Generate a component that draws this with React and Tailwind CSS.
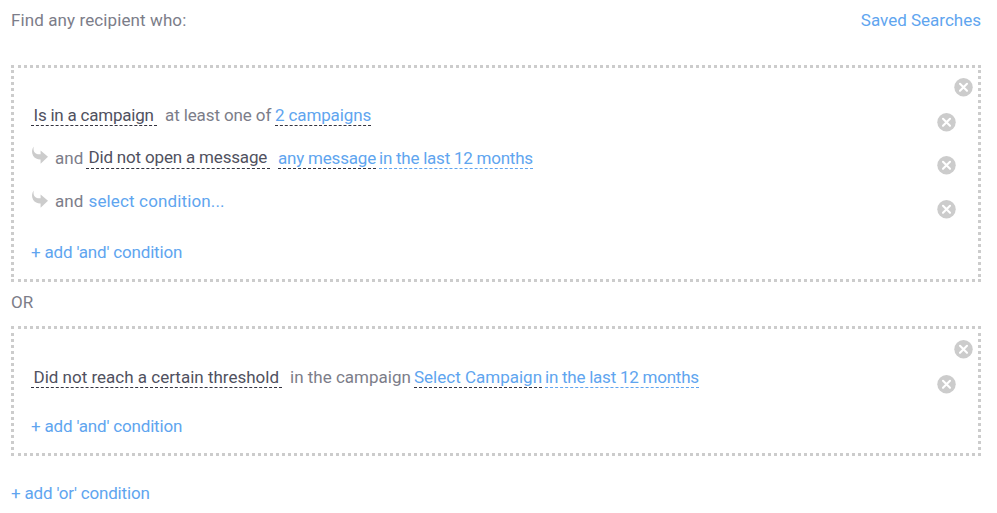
import React from 'react';

const ArrowIcon = ({ className = '' }) => (
  <svg className={`h-[19px] w-[17px] shrink-0 text-[#cccccc] ${className}`} viewBox="0 0 17 19" fill="currentColor">
    <path d="M2.8 0.6C0.8 2.8 0.4 6.8 2.1 9.8C3.8 12.6 6.6 13.6 9.6 13.5V17.8L17 10.8L9.6 4.4V8.2C6.8 8.4 4.5 8 3.3 6C2.4 4.4 2.3 2.4 2.8 0.6Z" />
  </svg>
);

const RemoveButton = ({ className = '' }) => (
  <button type="button" aria-label="Remove" className={`block ${className}`}>
    <svg className="block h-[19px] w-[19px]" viewBox="0 0 19 19" fill="none">
      <circle cx="9.5" cy="9.3" r="9.2" fill="#cccccc" />
      <path d="M6 5.8L13 12.8M13 5.8L6 12.8" stroke="#ffffff" strokeWidth="2.1" strokeLinecap="round" />
    </svg>
  </button>
);

const Condition = ({ className = '', children }) => (
  <span className={`block shrink-0 border-b border-dashed border-[#33333f] pl-[2.5px] text-[#505160] ${className}`}>
    {children}
  </span>
);

const Value = ({ className = '', children }) => (
  <a className={`block h-[23px] shrink-0 border-b border-dashed text-[#60a5ef] ${className}`}>
    {children}
  </a>
);

const Row = ({ className = '', removeClass = 'mt-[10px]', children }) => (
  <div className={`flex items-start justify-between pr-[22px] pl-[17px] ${className}`}>
    <div className="flex items-start">{children}</div>
    <RemoveButton className={removeClass} />
  </div>
);

const Group = ({ className = '', removeClass = 'top-[10px]', children }) => (
  <section className={`relative border-[3px] border-dotted border-[#cccccc] ${className}`}>
    <RemoveButton className={`absolute right-[4.6px] ${removeClass}`} />
    {children}
  </section>
);

const AddLink = ({ className = '', children }) => (
  <a className={`block tracking-[-0.18px] text-[#60a5ef] ${className}`}>{children}</a>
);

export default function App() {
  return (
    <main className="h-[513px] w-[997px] overflow-hidden bg-white pt-2 pr-4 pl-[11px] font-['Roboto',sans-serif] text-[17px] leading-6 whitespace-nowrap text-[#7c7d89]">
      <header className="flex justify-between">
        <span className="tracking-[0.1px]">Find any recipient who:</span>
        <a className="text-[#60a5ef]">Saved Searches</a>
      </header>

      <Group className="mt-[33px] h-[217px] pt-[35px]">
        <Row className="h-[43px]">
          <Condition className="h-[23px] w-[126px] tracking-[-0.22px]">Is in a campaign</Condition>
          <span className="ml-2 w-[110px] tracking-[-0.11px]">at least one of</span>
          <Value className="w-[96px] border-[#33333f] tracking-[-0.13px]">2 campaigns</Value>
        </Row>
        <Row className="h-[43px]">
          <ArrowIcon />
          <span className="ml-[7px] w-[31px]">and</span>
          <Condition className="-mt-px h-[24px] w-[184px] tracking-[-0.18px]">Did not open a message</Condition>
          <Value className="ml-2 w-[98px] border-[#33333f] tracking-[-0.2px]">any message</Value>
          <Value className="ml-[3px] w-[154px] border-[#60a5ef] tracking-[-0.24px]">in the last 12 months</Value>
        </Row>
        <Row className="h-[51px]" removeClass="mt-[11px]">
          <ArrowIcon className="mt-px" />
          <span className="ml-[7px] w-[33.5px]">and</span>
          <a className="tracking-[0.14px] text-[#60a5ef]">select condition...</a>
        </Row>
        <AddLink className="ml-[17px]">+ add 'and' condition</AddLink>
      </Group>

      <div className="mt-2 h-9">OR</div>

      <Group className="h-[130px] pt-[36px]" removeClass="top-[11px]">
        <Row className="h-[49px]">
          <Condition className="h-[23px] w-[251px]">Did not reach a certain threshold</Condition>
          <span className="ml-2 w-[124px]">in the campaign</span>
          <Value className="w-[128px] border-[#33333f]">Select Campaign</Value>
          <Value className="ml-[3px] w-[154px] border-[#60a5ef] tracking-[-0.24px]">in the last 12 months</Value>
        </Row>
        <AddLink className="ml-[17px]">+ add 'and' condition</AddLink>
      </Group>

      <AddLink className="mt-[25px]">+ add 'or' condition</AddLink>
    </main>
  );
}
